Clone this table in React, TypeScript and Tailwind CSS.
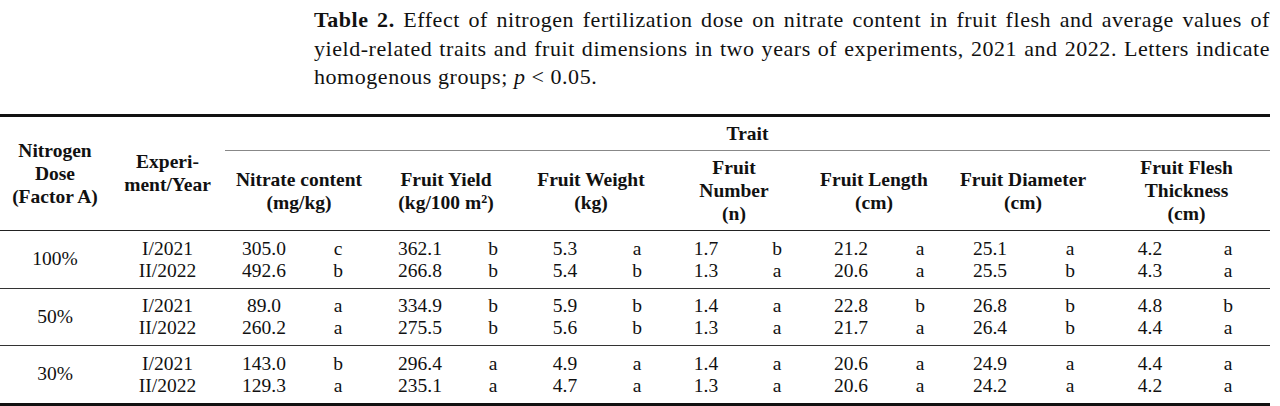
const serif = { fontFamily: '"Liberation Serif", "Times New Roman", serif' };

type Row = { year: string; vals: [string, string][] };
type Group = { dose: string; rows: Row[] };

const groups: Group[] = [
  {
    dose: "100%",
    rows: [
      { year: "I/2021", vals: [["305.0", "c"], ["362.1", "b"], ["5.3", "a"], ["1.7", "b"], ["21.2", "a"], ["25.1", "a"], ["4.2", "a"]] },
      { year: "II/2022", vals: [["492.6", "b"], ["266.8", "b"], ["5.4", "b"], ["1.3", "a"], ["20.6", "a"], ["25.5", "b"], ["4.3", "a"]] },
    ],
  },
  {
    dose: "50%",
    rows: [
      { year: "I/2021", vals: [["89.0", "a"], ["334.9", "b"], ["5.9", "b"], ["1.4", "a"], ["22.8", "b"], ["26.8", "b"], ["4.8", "b"]] },
      { year: "II/2022", vals: [["260.2", "a"], ["275.5", "b"], ["5.6", "b"], ["1.3", "a"], ["21.7", "a"], ["26.4", "b"], ["4.4", "a"]] },
    ],
  },
  {
    dose: "30%",
    rows: [
      { year: "I/2021", vals: [["143.0", "b"], ["296.4", "a"], ["4.9", "a"], ["1.4", "a"], ["20.6", "a"], ["24.9", "a"], ["4.4", "a"]] },
      { year: "II/2022", vals: [["129.3", "a"], ["235.1", "a"], ["4.7", "a"], ["1.3", "a"], ["20.6", "a"], ["24.2", "a"], ["4.2", "a"]] },
    ],
  },
];

// widths of each column in px
const widths = [110, 115, 78, 70, 94, 52, 92, 52, 86, 56, 92, 46, 94, 66, 94, 73];

export default function App() {
  return (
    <div className="w-[1280px] h-[406px] bg-white text-[#111] overflow-hidden" style={serif}>
      <div className="ml-[314px] w-[956px] pt-[6px] text-[22px] tracking-[0.55px] leading-[28.5px] whitespace-nowrap">
        <div className="text-justify [text-align-last:justify]">
          <b>Table 2.</b> Effect of nitrogen fertilization dose on nitrate content in fruit flesh and average values of
        </div>
        <div className="text-justify [text-align-last:justify]">
          yield-related traits and fruit dimensions in two years of experiments, 2021 and 2022. Letters indicate
        </div>
        <div>
          homogenous groups; <i>p</i> &lt; 0.05.
        </div>
      </div>

      <div className="mt-[22px] w-[1270px] border-t-[3px] border-b-[3px] border-[#111]">
        <table className="w-[1270px] table-fixed border-collapse">
          <colgroup>
            {widths.map((w, i) => (
              <col key={i} style={{ width: w }} />
            ))}
          </colgroup>
          <thead className="font-bold text-[19.5px] leading-[23px]">
            <tr className="h-[34px]">
              <th rowSpan={2} className="align-middle text-center font-bold border-b-[1.5px] border-[#222]">
                Nitrogen
                <br />
                Dose
                <br />
                (Factor A)
              </th>
              <th rowSpan={2} className="align-middle text-center font-bold border-b-[1.5px] border-[#222]">
                Experi-
                <br />
                ment/Year
              </th>
              <th colSpan={14} className="text-center font-bold border-b border-[#888]">
                Trait
              </th>
            </tr>
            <tr className="h-[80px] border-b-[1.5px] border-[#222]">
              <th colSpan={2} className="font-bold">
                Nitrate content
                <br />
                (mg/kg)
              </th>
              <th colSpan={2} className="font-bold">
                Fruit Yield
                <br />
                (kg/100 m<sup className="text-[12px]">2</sup>)
              </th>
              <th colSpan={2} className="font-bold">
                Fruit Weight
                <br />
                (kg)
              </th>
              <th colSpan={2} className="font-bold">
                Fruit
                <br />
                Number
                <br />
                (n)
              </th>
              <th colSpan={2} className="font-bold">
                Fruit Length
                <br />
                (cm)
              </th>
              <th colSpan={2} className="font-bold">
                Fruit Diameter
                <br />
                (cm)
              </th>
              <th colSpan={2} className="font-bold">
                Fruit Flesh
                <br />
                Thickness
                <br />
                (cm)
              </th>
            </tr>
          </thead>
          {groups.map((g, gi) => (
            <tbody key={g.dose} className={`text-[19.5px] leading-[22px] ${gi > 0 ? "border-t border-[#333]" : ""}`}>
              {g.rows.map((r, ri) => {
                const pad = ri === 0 ? "pt-[6.5px]" : "pb-[6px]";
                return (
                  <tr key={r.year}>
                    {ri === 0 && (
                      <td rowSpan={2} className="text-center align-middle">
                        {g.dose}
                      </td>
                    )}
                    <td className={`text-center ${pad}`}>{r.year}</td>
                    {r.vals.map(([v, l], vi) => (
                      <>
                        <td key={`v${vi}`} className={`text-center ${pad}`}>
                          {v}
                        </td>
                        <td key={`l${vi}`} className={`text-center ${pad} ${vi === 6 ? "pr-[11px]" : ""}`}>
                          {l}
                        </td>
                      </>
                    ))}
                  </tr>
                );
              })}
            </tbody>
          ))}
        </table>
      </div>
    </div>
  );
}
